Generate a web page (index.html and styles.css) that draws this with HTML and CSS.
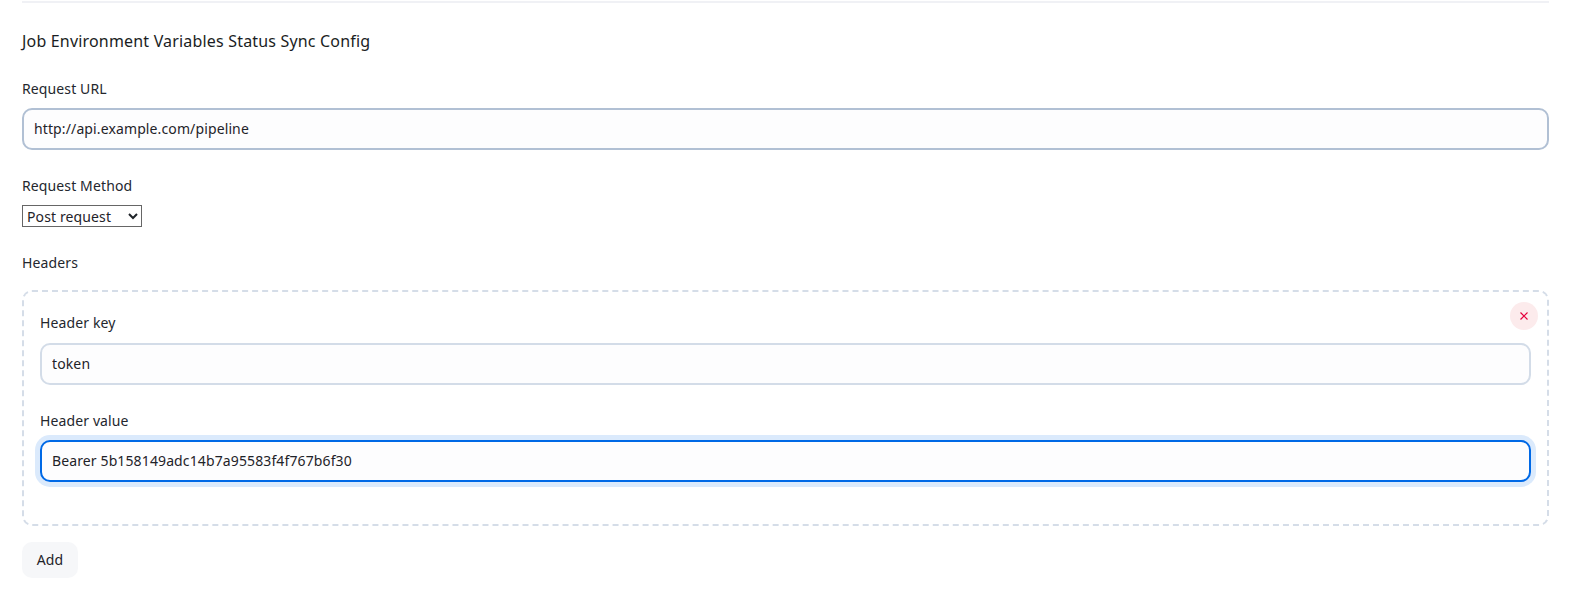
FILE: index.html
```html
<!DOCTYPE html>
<html lang="en">
<head>
<meta charset="utf-8">
<title>Job Environment Variables Status Sync Config</title>
<link rel="stylesheet" href="styles.css">
</head>
<body>
<main class="page">
  <hr class="divider">
  <h2 class="title">Job Environment Variables Status Sync Config</h2>
  <form class="form">
    <div class="field">
      <label class="label" for="url">Request URL</label>
      <input class="input input-url" id="url" type="text" value="http://api.example.com/pipeline">
    </div>
    <div class="field field-select">
      <label class="label" for="method">Request Method</label>
      <select class="select" id="method"><option>Post request</option><option>Get request</option></select>
    </div>
    <div class="field field-headers">
      <span class="label">Headers</span>
      <div class="headers-box">
        <button class="remove" type="button" aria-label="Remove">
          <svg viewBox="0 0 10 10" width="10" height="10"><path d="M1.5 1.5l7 7M8.5 1.5l-7 7" fill="none" stroke="#e5003c" stroke-width="1.2"/></svg>
        </button>
        <div class="field field-key">
          <label class="label" for="key">Header key</label>
          <input class="input" id="key" type="text" value="token">
        </div>
        <div class="field field-value">
          <label class="label" for="val">Header value</label>
          <input class="input input-focus" id="val" type="text" value="Bearer 5b158149adc14b7a95583f4f767b6f30">
        </div>
      </div>
    </div>
    <button class="add" type="button">Add</button>
  </form>
</main>
</body>
</html>
```
FILE: styles.css
```css
* { box-sizing: border-box; }
html, body { margin: 0; background: #fff; }
body {
  font-family: "Noto Sans", "Open Sans", sans-serif;
  font-size: 14px;
  letter-spacing: 0.12px;
  color: #1f2329;
  overflow: hidden;
  height: 593px;
}
.page { padding: 1px 29px 0 22px; }
.divider { margin: 0; height: 2px; border: 0; background: #f0f1f5; }
.title { margin: 25px 0 0; font-size: 16px; letter-spacing: 0.18px; font-weight: 400; line-height: 26px; color: #1a1d23; }
.form { display: block; margin-top: 25px; }
.field { display: flex; flex-direction: column; align-items: stretch; }
.label { display: block; height: 20px; line-height: 20px; font-size: 14px; margin-bottom: 9px; color: #24272e; }
.input {
  display: block;
  width: 100%;
  height: 42px;
  padding: 0 10px 2px;
  border: 2px solid #b1c0d4;
  border-radius: 10px;
  background: #fdfdfe;
  font: inherit;
  letter-spacing: inherit;
  color: #1f2329;
  outline: none;
}
.field-select { margin-top: 26px; align-items: flex-start; }
.select {
  width: 120px;
  height: 22px;
  padding: 0 0 1px;
  border: 1px solid #666;
  border-radius: 0;
  background: #fff;
  font: inherit;
  letter-spacing: inherit;
  color: #1f2329;
}
.field-headers { margin-top: 26px; }
.field-headers > .label { margin-bottom: 17px; }
.headers-box {
  position: relative;
  height: 236px;
  padding: 21px 16px 0;
  border: 2px dashed #d5dde8;
  border-radius: 10px;
}
.headers-box .input { border-color: #d3dce8; }
.headers-box .input-focus { border-color: #0069e6; box-shadow: 0 0 0 5px #dbeafc; }
.field-key .label { margin-bottom: 10px; }
.field-value { margin-top: 26px; }
.remove {
  position: absolute;
  top: 10px;
  right: 9px;
  display: flex;
  align-items: center;
  justify-content: center;
  width: 28px;
  height: 28px;
  padding: 0;
  border: 0;
  border-radius: 50%;
  background: #fcebec;
}
.add {
  display: block;
  width: 56px;
  height: 36px;
  margin-top: 16px;
  padding: 0 0 2px;
  border: 0;
  border-radius: 10px;
  background: #f6f7f9;
  font: inherit;
  letter-spacing: inherit;
  color: #1f2329;
}
```
